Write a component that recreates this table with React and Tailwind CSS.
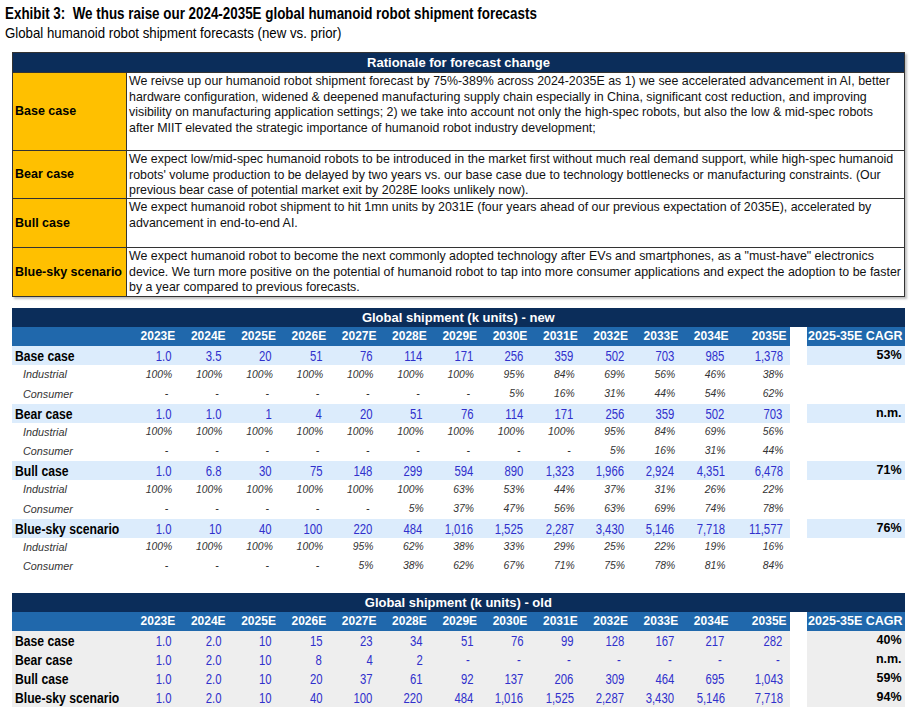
// Exhibit: global humanoid robot shipment forecasts (new vs. prior)

const years = ['2023E', '2024E', '2025E', '2026E', '2027E', '2028E', '2029E', '2030E', '2031E', '2032E', '2033E', '2034E', '2035E']

const rep = (v, n) => Array(n).fill(v)

// lines broken as in the original exhibit
const rationale = [
  {
    label: 'Base case',
    h: 'h-[78px]',
    lines: [
      'We reivse up our humanoid robot shipment forecast by 75%-389% across 2024-2035E as 1) we see accelerated advancement in AI, better',
      'hardware configuration, widened & deepened manufacturing supply chain especially in China, significant cost reduction, and improving',
      'visibility on manufacturing application settings; 2) we take into account not only the high-spec robots, but also the low & mid-spec robots',
      'after MIIT elevated the strategic importance of humanoid robot industry development;',
    ],
  },
  {
    label: 'Bear case',
    h: 'h-[48px]',
    lines: [
      'We expect low/mid-spec humanoid robots to be introduced in the market first without much real demand support, while high-spec humanoid',
      "robots' volume production to be delayed by two years vs. our base case due to technology bottlenecks or manufacturing constraints. (Our",
      'previous bear case of potential market exit by 2028E looks unlikely now).',
    ],
  },
  {
    label: 'Bull case',
    h: 'h-[49px]',
    lines: [
      'We expect humanoid robot shipment to hit 1mn units by 2031E (four years ahead of our previous expectation of 2035E), accelerated by',
      'advancement in end-to-end AI.',
    ],
  },
  {
    label: 'Blue-sky scenario',
    h: 'h-[49px]',
    lines: [
      'We expect humanoid robot to become the next commonly adopted technology after EVs and smartphones, as a "must-have" electronics',
      'device. We turn more positive on the potential of humanoid robot to tap into more consumer applications and expect the adoption to be faster',
      'by a year compared to previous forecasts.',
    ],
  },
]

const newData = [
  {
    name: 'Base case',
    vals: ['1.0', '3.5', '20', '51', '76', '114', '171', '256', '359', '502', '703', '985', '1,378'],
    ind: [...rep('100%', 7), '95%', '84%', '69%', '56%', '46%', '38%'],
    con: [...rep('-', 7), '5%', '16%', '31%', '44%', '54%', '62%'],
    cagr: '53%',
  },
  {
    name: 'Bear case',
    vals: ['1.0', '1.0', '1', '4', '20', '51', '76', '114', '171', '256', '359', '502', '703'],
    ind: [...rep('100%', 9), '95%', '84%', '69%', '56%'],
    con: [...rep('-', 9), '5%', '16%', '31%', '44%'],
    cagr: 'n.m.',
  },
  {
    name: 'Bull case',
    vals: ['1.0', '6.8', '30', '75', '148', '299', '594', '890', '1,323', '1,966', '2,924', '4,351', '6,478'],
    ind: [...rep('100%', 6), '63%', '53%', '44%', '37%', '31%', '26%', '22%'],
    con: [...rep('-', 5), '5%', '37%', '47%', '56%', '63%', '69%', '74%', '78%'],
    cagr: '71%',
  },
  {
    name: 'Blue-sky scenario',
    vals: ['1.0', '10', '40', '100', '220', '484', '1,016', '1,525', '2,287', '3,430', '5,146', '7,718', '11,577'],
    ind: [...rep('100%', 4), '95%', '62%', '38%', '33%', '29%', '25%', '22%', '19%', '16%'],
    con: [...rep('-', 4), '5%', '38%', '62%', '67%', '71%', '75%', '78%', '81%', '84%'],
    cagr: '76%',
  },
]

const oldData = [
  { name: 'Base case', vals: ['1.0', '2.0', '10', '15', '23', '34', '51', '76', '99', '128', '167', '217', '282'], cagr: '40%' },
  { name: 'Bear case', vals: ['1.0', '2.0', '10', '8', '4', '2', ...rep('-', 7)], cagr: 'n.m.' },
  { name: 'Bull case', vals: ['1.0', '2.0', '10', '20', '37', '61', '92', '137', '206', '309', '464', '695', '1,043'], cagr: '59%' },
  { name: 'Blue-sky scenario', vals: ['1.0', '2.0', '10', '40', '100', '220', '484', '1,016', '1,525', '2,287', '3,430', '5,146', '7,718'], cagr: '94%' },
]

// width of each year column; the last one is a bit wider
const colW = (i) => (i === 12 ? 'w-[58px]' : 'w-[50.3px]')

function TableHead({ title }) {
  return (
    <>
      <div className="h-[19px] bg-[#0b2d5a] text-white font-bold text-[13px] leading-[19px] text-center">{title}</div>
      <div className="flex h-[19px] leading-[19px] text-white font-bold">
        <div className="flex w-[777.6px] bg-[#2068ac] text-[12px]">
          <div className="w-[116px] shrink-0" />
          {years.map((y, i) => (
            <div key={y} className={`${colW(i)} shrink-0 text-right pr-[3px]`}>
              {y}
            </div>
          ))}
        </div>
        <div className="w-[17px]" />
        <div className="w-[98px] bg-[#2068ac] text-right pr-[2px] text-[12.5px] whitespace-nowrap">2025-35E CAGR</div>
      </div>
    </>
  )
}

function MainRow({ name, vals, cagr, bg }) {
  return (
    <div className="flex h-[19px] leading-[19px]">
      <div className={`flex w-[777.6px] ${bg}`}>
        <div className="w-[116px] shrink-0 pl-[3px] whitespace-nowrap">
          <span className="inline-block origin-left scale-x-[0.87] font-bold text-[14px] text-black">{name}</span>
        </div>
        {vals.map((v, i) => (
          <div key={i} className={`${colW(i)} shrink-0 text-right ${v === '-' ? 'pr-[10px]' : 'pr-[7px]'}`}>
            <span className="inline-block origin-right scale-x-[0.81] text-[14px] text-[#3030cc]">{v}</span>
          </div>
        ))}
      </div>
      <div className="w-[17px]" />
      <div className={`w-[98px] ${bg} text-right pr-[3px] font-bold text-[12.5px] text-black`}>{cagr}</div>
    </div>
  )
}

function SubRow({ name, vals, h }) {
  return (
    <div className={`flex ${h} items-center`}>
      <div className="w-[116px] shrink-0 pl-[11px] italic text-[10.8px] text-[#333]">{name}</div>
      {vals.map((v, i) => (
        <div
          key={i}
          className={`${colW(i)} shrink-0 text-right italic text-[10.4px] text-[#333] ${v === '-' ? 'pr-[10px]' : 'pr-[6px]'}`}
        >
          {v}
        </div>
      ))}
    </div>
  )
}

export default function App() {
  return (
    <div className="w-[913px] h-[716px] bg-white font-['Liberation_Sans',Arial,sans-serif] text-black pt-[2px] overflow-hidden">
      {/* Titre */}
      <div className="pl-[5px]">
        <div className="h-[19px] whitespace-nowrap">
          <span className="inline-block origin-left scale-x-[0.837] font-bold text-[16px] leading-[19px]">
            Exhibit 3:&nbsp; We thus raise our 2024-2035E global humanoid robot shipment forecasts
          </span>
        </div>
        <div className="h-[17px] whitespace-nowrap">
          <span className="inline-block origin-left scale-x-[0.883] text-[15px] leading-[17px]">
            Global humanoid robot shipment forecasts (new vs. prior)
          </span>
        </div>
      </div>

      {/* Rationale */}
      <div className="ml-[12px] mt-[14px] w-[893px] border border-[#333] shadow-[2px_2px_2px_rgba(0,0,0,0.25)]">
        <div className="h-[19px] bg-[#0b2d5a] text-white font-bold text-[13px] leading-[19px] text-center">
          Rationale for forecast change
        </div>
        {rationale.map((r) => (
          <div key={r.label} className={`flex ${r.h} border-t border-[#333]`}>
            <div className="w-[114px] shrink-0 bg-[#ffc000] border-r border-[#333] flex items-center pl-[2px] font-bold text-[12.5px]">
              {r.label}
            </div>
            <div className="flex-1 pl-[2px] pt-[1px] text-[12.4px] leading-[15.6px] text-[#111] whitespace-nowrap overflow-hidden">
              {r.lines.map((l, i) => (
                <div key={i}>{l}</div>
              ))}
            </div>
          </div>
        ))}
      </div>

      {/* New forecasts */}
      <div className="ml-[12px] mt-[11px] w-[892.6px]">
        <TableHead title="Global shipment (k units) - new" />
        {newData.map((d) => (
          <div key={d.name}>
            <MainRow name={d.name} vals={d.vals} cagr={d.cagr} bg="bg-[#dcecfc]" />
            <SubRow name="Industrial" vals={d.ind} h="h-[19px]" />
            <SubRow name="Consumer" vals={d.con} h="h-[19.5px]" />
          </div>
        ))}
      </div>

      {/* Old forecasts */}
      <div className="ml-[12px] mt-[17px] w-[892.6px]">
        <TableHead title="Global shipment (k units) - old" />
        {oldData.map((d) => (
          <MainRow key={d.name} name={d.name} vals={d.vals} cagr={d.cagr} bg="bg-[#eeeeee]" />
        ))}
      </div>
    </div>
  )
}
